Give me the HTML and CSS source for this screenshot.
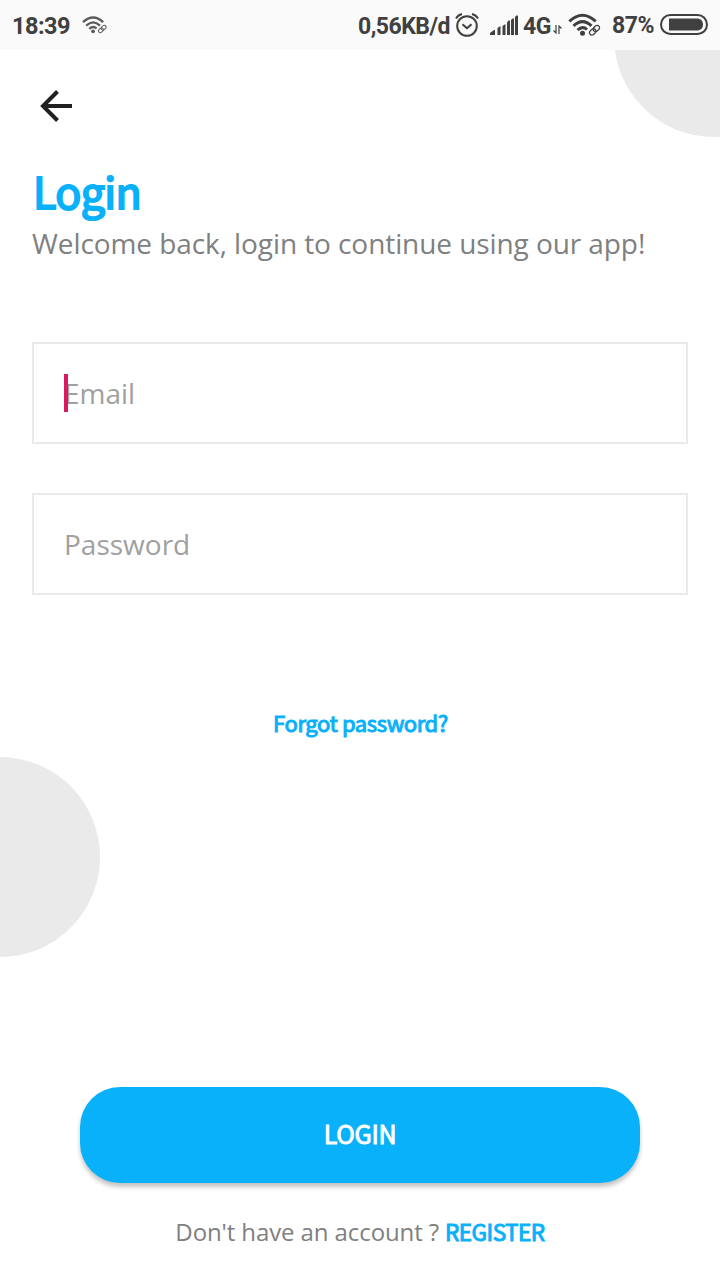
FILE: index.html
```html
<!DOCTYPE html>
<html lang="en">
<head>
<meta charset="utf-8">
<title>Login</title>
<link rel="stylesheet" href="styles.css">
</head>
<body>
<div class="screen">
  <div class="circle circle-top"></div>
  <div class="circle circle-left"></div>
  <header class="status">
    <span class="time">18:39</span>
    <svg class="wifi-small" width="26" height="20" viewBox="0 0 34 24"><use href="#wifi"/></svg>
    <span class="speed">0,56KB/d</span>
    <svg class="alarm" width="26" height="26" viewBox="0 0 26 26" fill="none" stroke="#404040" stroke-width="2"><circle cx="13" cy="14" r="9.8"/><path d="M8.500 12.300l4.500 4 4.500-4M2 6.500Q4 3 8 2M24 6.500Q22 3 18 2" stroke-linejoin="round"/></svg>
    <svg class="signal" width="28" height="20" viewBox="0 0 28 20" fill="#404040"><path d="M0 20v-2l4-3h1v5zM7.500 20v-7l3-2v9zM12.500 20v-9l3-2v11zM17 20V7.500l1.500-2H20V20zM21 20V5l1.500-1.500H24V20zM25 20V2l1.500-1.500H28V20z"/></svg>
    <span class="network">4G</span>
    <svg class="arrows" width="9" height="9" viewBox="0 0 9 9" fill="none" stroke="#404040" stroke-width="1.200"><path d="M3 0v8L.5 5.500M6 9V1l2.500 2.500"/></svg>
    <svg class="wifi" width="34" height="24" viewBox="0 0 34 24">
      <g id="wifi" fill="none" stroke="#404040">
        <path stroke-width="3" d="M1.300 8.300Q14.500-3.800 27.700 8.300M5.500 12.800Q14.500 4.300 23.500 12.800M9.500 17Q14.500 12.500 19 16.500"/>
        <circle cx="14.500" cy="20.300" r="2.500" fill="#404040" stroke="none"/>
        <g transform="translate(26.500 17.200) rotate(-43)" stroke-width="1.300"><rect x="-6" y="-2.400" width="7" height="4.800" rx="2.400"/><rect x="-1" y="-2.400" width="7" height="4.800" rx="2.400"/></g>
      </g>
    </svg>
    <span class="percent">87%</span>
    <svg class="battery" width="48" height="22" viewBox="0 0 48 22"><rect x="1" y="1" width="46" height="19" rx="9.500" fill="none" stroke="#404040" stroke-width="2"/><path d="M9 4.500h29q5 1 5 6t-5 6H9z" fill="#404040"/></svg>
  </header>
  <main>
    <svg class="back" width="34" height="34" viewBox="0 0 34 34" fill="none" stroke="#212121" stroke-width="4"><path d="M33 17H4M18.500 2.500L4 17l14.500 14.500"/></svg>
    <h1><span>Login</span></h1>
    <p class="subtitle"><span>Welcome back, login to continue using our app!</span></p>
    <div class="field email"><span>Email</span><i class="caret"></i></div>
    <div class="field password"><span>Password</span></div>
    <a class="forgot">Forgot password?</a>
    <div class="button">LOGIN</div>
    <p class="signup"><span class="question">Don't have an account ?</span><a class="register">REGISTER</a></p>
  </main>
</div>
</body>
</html>
```
FILE: styles.css
```css
* { box-sizing: border-box; }
body { margin: 0; background: #fff; }
.screen { position: relative; width: 720px; height: 1280px; overflow: hidden; font-family: "Open Sans", sans-serif; }
.circle { position: absolute; width: 200px; height: 200px; border-radius: 50%; background: #eaeaea; }
.circle-top { left: 614px; top: -63px; }
.circle-left { left: -100px; top: 757px; }
.status { position: relative; display: flex; align-items: flex-start; height: 50px; background: #fafafa; color: #404040; font: bold 23px/28px Roboto, sans-serif; white-space: nowrap; }
.status > * { flex: none; }
.time { width: 58px; margin: 12px 0 0 12px; font-size: 23.500px; letter-spacing: -.5px; }
.wifi-small { margin: 15px 0 0 12px; opacity: .85; }
.speed { width: 93px; margin: 13px 0 0 250px; letter-spacing: -.5px; }
.alarm { margin: 12px 0 0 3px; }
.signal { margin: 15px 0 0 10px; }
.network { width: 28px; margin: 13px 0 0 5px; letter-spacing: -.5px; }
.arrows { margin: 25px 0 0 2px; }
.wifi { margin: 13px 0 0 6px; }
.percent { width: 43px; margin: 12px 0 0 10px; letter-spacing: -.5px; }
.battery { margin: 14px 0 0 5px; }
main { position: relative; display: flex; flex-direction: column; padding: 0 32px; }
h1, p { margin: 0; }
.back { margin: 39px 0 0 7px; }
h1, .forgot, .button, .register { font-family: "Noto Sans CJK JP", sans-serif; font-weight: 400; color: #09b0fa; }
h1 { margin-top: 37px; padding-left: 1px; height: 60px; font-size: 43px; line-height: 60px; letter-spacing: -.6px; -webkit-text-stroke: 2px #09b0fa; }
.subtitle { height: 40px; margin-top: 3px; font-size: 28px; line-height: 40px; letter-spacing: -.08px; color: #808080; white-space: nowrap; }
.field { position: relative; height: 102px; border: 2px solid #eaeaea; padding-left: 30px; font-size: 28px; line-height: 98px; color: #a0a0a0; }
.email { margin-top: 79px; }
.password { margin-top: 49px; }
.caret { position: absolute; left: 30px; top: 30px; width: 4px; height: 38px; background: #d81b60; }
.forgot { align-self: center; height: 34px; margin-top: 110px; padding-left: 1px; font-size: 22px; line-height: 34px; letter-spacing: -.4px; -webkit-text-stroke: 1px #09b0fa; white-space: nowrap; }
.button { height: 96px; margin: 348px 48px 0; border-radius: 40px; background: #09b0fa; color: #fff; font-size: 25px; line-height: 93px; letter-spacing: -.3px; -webkit-text-stroke: .9px #fff; text-align: center; box-shadow: 0 4px 4px rgba(0,0,0,.23); }
.signup { display: flex; justify-content: center; margin-top: 31px; height: 36px; font-size: 24px; line-height: 36px; letter-spacing: -.1px; color: #808080; white-space: nowrap; }
.register { height: 34px; margin-left: 6px; font-size: 22.500px; line-height: 34px; letter-spacing: -.5px; -webkit-text-stroke: 1px #09b0fa; }
```
